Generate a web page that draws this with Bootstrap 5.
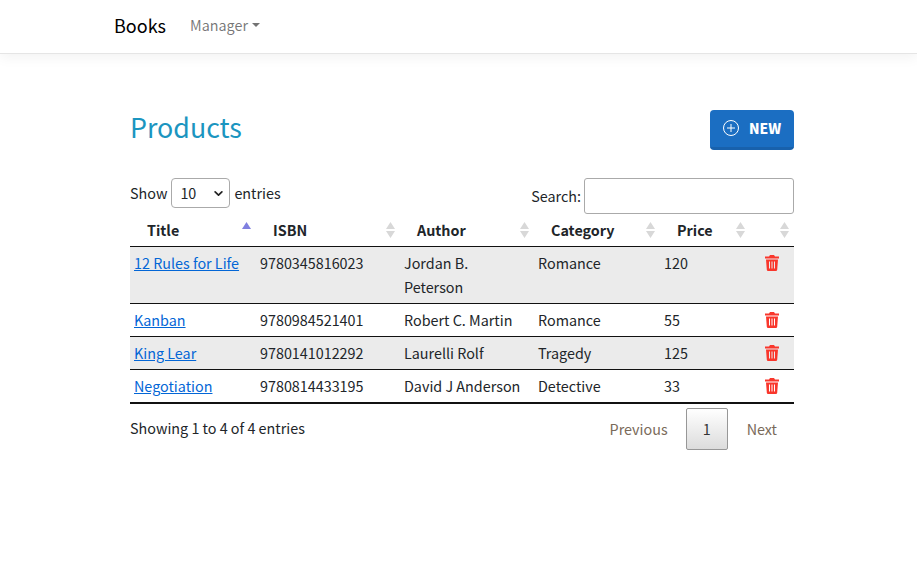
<!DOCTYPE html>
<html lang="en">
<head>
    <meta charset="UTF-8">
    <meta name="viewport" content="width=device-width, initial-scale=1.0">
    <title>Products</title>
    <link href="https://cdn.jsdelivr.net/npm/bootstrap@5.3.0/dist/css/bootstrap.min.css" rel="stylesheet">
    <style>
        body {
            background-color: #fff;
            font-family: "Noto Sans CJK SC", "Noto Sans", sans-serif;
            font-size: 14.35px;
            line-height: 24px;
            color: #212529;
        }
        a {
            color: #0366d6;
        }
        .top-bar {
            height: 54px;
            padding: 0 0 0 114px;
            box-shadow: 0 .25rem .75rem rgba(0, 0, 0, .05);
            border-bottom: 1px solid #e5e5e5;
        }
        .top-bar .navbar-brand {
            font-size: 18px;
            line-height: 26px;
            padding: 0 0 4px;
            margin-right: 16px;
        }
        .top-bar .nav-link {
            color: rgba(0, 0, 0, .55);
            padding: 6px 8px 10px;
        }
        .page-body {
            width: 664px;
            margin-left: 130px;
            padding-top: 56px;
        }
        .page-title {
            color: #1b95c0;
            font-size: 26.8px;
            font-weight: 400;
            line-height: 34px;
            margin: 0 0 6px;
        }
        .new-btn {
            height: 40px;
            width: 84px;
            padding: 0 0 2px 12px;
            background-color: #1b6ec2;
            border: 0;
            border-bottom: 3px solid #1861ac;
            border-radius: 4px;
            color: #fff;
            font-weight: 900;
            font-size: 13.8px;
        }
        .new-btn svg {
            margin-right: 9px;
        }
        .tools-row {
            margin-top: 28px;
            height: 36px;
        }
        .show-text {
            margin-right: 4px;
            padding-top: 3px;
        }
        .entries-text {
            margin-left: 4px;
            padding-top: 3px;
        }
        .len-select {
            width: 59px;
            height: 30px;
            padding: 0 0 0 8px;
            background-image: url("data:image/svg+xml,%3csvg xmlns='http://www.w3.org/2000/svg' viewBox='0 0 16 16'%3e%3cpath fill='none' stroke='%23222' stroke-linecap='round' stroke-linejoin='round' stroke-width='3' d='m2 5 6 6 6-6'/%3e%3c/svg%3e");
            background-position: right 6px center;
            background-size: 9px 9px;
            border-radius: 4px;
            font-size: 14.35px;
            line-height: 24px;
            border-color: #aaa;
            color: #212529;
        }
        .search-input {
            width: 210px;
            height: 36px;
            border: 1px solid #aaa;
            border-radius: 3px;
            margin-left: 3px;
        }
        .books-table {
            table-layout: fixed;
            width: 664px;
            margin: 0;
            color: #212529;
        }
        .books-table th {
            position: relative;
            padding: 3px 4px 4px 17px;
            height: 32px;
            font-weight: 700;
            border-bottom: 1px solid #111;
        }
        .books-table td {
            padding: 4px;
            border: 0;
            border-top: 1px solid #111;
            vertical-align: top;
            background: transparent;
        }
        .books-table tbody tr:first-child td {
            border-top: 0;
        }
        .books-table tbody tr:last-child td {
            border-bottom: 2px solid #111;
        }
        .books-table .shaded td {
            background-color: #ebebeb;
        }
        .sort-mark {
            position: absolute;
            right: 5px;
            top: 8px;
            width: 9px;
            height: 16px;
        }
        .trash-icon {
            display: block;
            width: 14px;
            height: 16px;
            margin: 4px 0 0 11px;
        }
        .info-row {
            padding-top: 4px;
        }
        .pager-btn {
            display: block;
            height: 42px;
            padding: 8px 17px;
            color: #7a6a5a;
            border: 1px solid transparent;
            border-radius: 2px;
            text-decoration: none;
        }
        .pager-btn.current {
            color: #333;
            width: 42px;
            padding: 8px 0;
            text-align: center;
            border-color: #979797;
            background: linear-gradient(to bottom, #fff 0%, #dcdcdc 100%);
        }
        .pager-btn.next-link {
            padding-left: 18px;
            padding-right: 16px;
        }
    </style>
</head>
<body>
    <nav class="navbar navbar-expand navbar-light bg-white top-bar justify-content-start">
        <a class="navbar-brand" href="#">Books</a>
        <ul class="navbar-nav">
            <li class="nav-item dropdown">
                <a class="nav-link dropdown-toggle" href="#" role="button" data-bs-toggle="dropdown">Manager</a>
            </li>
        </ul>
    </nav>

    <main class="page-body">
        <div class="d-flex justify-content-between align-items-center">
            <h1 class="page-title">Products</h1>
            <button class="new-btn d-flex align-items-center" type="button">
                <svg width="18" height="18" viewBox="0 0 18 18" fill="none" stroke="#fff">
                    <circle cx="9" cy="9" r="7.5"/>
                    <path d="M9 5v8M5 9h8"/>
                </svg>
                <span>NEW</span>
            </button>
        </div>

        <div class="tools-row d-flex justify-content-between">
            <label class="d-flex align-items-start">
                <span class="show-text">Show</span>
                <select class="form-select len-select">
                    <option>10</option>
                    <option>25</option>
                </select>
                <span class="entries-text">entries</span>
            </label>
            <label class="d-flex align-items-center">
                Search:<input type="search" class="search-input">
            </label>
        </div>

        <table class="table books-table">
            <colgroup>
                <col width="126"><col width="144"><col width="134"><col width="126"><col width="90"><col width="44">
            </colgroup>
            <thead>
                <tr>
                    <th>Title<svg class="sort-mark" viewBox="0 0 9 16"><path d="M4.500 0L9 7H0z" fill="#8080e0"/></svg></th>
                    <th>ISBN<svg class="sort-mark" viewBox="0 0 9 16"><path d="M4.500 0L9 7H0zM4.500 16L9 9H0z" fill="#d8d8d8"/></svg></th>
                    <th>Author<svg class="sort-mark" viewBox="0 0 9 16"><path d="M4.500 0L9 7H0zM4.500 16L9 9H0z" fill="#d8d8d8"/></svg></th>
                    <th>Category<svg class="sort-mark" viewBox="0 0 9 16"><path d="M4.500 0L9 7H0zM4.500 16L9 9H0z" fill="#d8d8d8"/></svg></th>
                    <th>Price<svg class="sort-mark" viewBox="0 0 9 16"><path d="M4.500 0L9 7H0zM4.500 16L9 9H0z" fill="#d8d8d8"/></svg></th>
                    <th><svg class="sort-mark" viewBox="0 0 9 16"><path d="M4.500 0L9 7H0zM4.500 16L9 9H0z" fill="#d8d8d8"/></svg></th>
                </tr>
            </thead>
            <tbody>
                <tr class="shaded">
                    <td><a href="#">12 Rules for Life</a></td>
                    <td>9780345816023</td>
                    <td>Jordan B. Peterson</td>
                    <td>Romance</td>
                    <td>120</td>
                    <td><svg class="trash-icon" viewBox="0 0 14 16"><path fill="#f9372c" fill-rule="evenodd" d="M5 0h4l1 1.500h4V3.500H0V1.500h4zM1 4.500h12l-.8 10.200a1.400 1.400 0 0 1-1.400 1.300H3.200a1.400 1.400 0 0 1-1.400-1.300zM4 6.500v7h1v-7zM6.500 6.500v7h1v-7zM9 6.500v7h1v-7z"/></svg></td>
                </tr>
                <tr>
                    <td><a href="#">Kanban</a></td>
                    <td>9780984521401</td>
                    <td>Robert C. Martin</td>
                    <td>Romance</td>
                    <td>55</td>
                    <td><svg class="trash-icon" viewBox="0 0 14 16"><path fill="#f9372c" fill-rule="evenodd" d="M5 0h4l1 1.500h4V3.500H0V1.500h4zM1 4.500h12l-.8 10.200a1.400 1.400 0 0 1-1.400 1.300H3.200a1.400 1.400 0 0 1-1.400-1.300zM4 6.500v7h1v-7zM6.500 6.500v7h1v-7zM9 6.500v7h1v-7z"/></svg></td>
                </tr>
                <tr class="shaded">
                    <td><a href="#">King Lear</a></td>
                    <td>9780141012292</td>
                    <td>Laurelli Rolf</td>
                    <td>Tragedy</td>
                    <td>125</td>
                    <td><svg class="trash-icon" viewBox="0 0 14 16"><path fill="#f9372c" fill-rule="evenodd" d="M5 0h4l1 1.500h4V3.500H0V1.500h4zM1 4.500h12l-.8 10.200a1.400 1.400 0 0 1-1.400 1.300H3.200a1.400 1.400 0 0 1-1.400-1.300zM4 6.500v7h1v-7zM6.500 6.500v7h1v-7zM9 6.500v7h1v-7z"/></svg></td>
                </tr>
                <tr>
                    <td><a href="#">Negotiation</a></td>
                    <td>9780814433195</td>
                    <td>David J Anderson</td>
                    <td>Detective</td>
                    <td>33</td>
                    <td><svg class="trash-icon" viewBox="0 0 14 16"><path fill="#f9372c" fill-rule="evenodd" d="M5 0h4l1 1.500h4V3.500H0V1.500h4zM1 4.500h12l-.8 10.200a1.400 1.400 0 0 1-1.400 1.300H3.200a1.400 1.400 0 0 1-1.400-1.300zM4 6.500v7h1v-7zM6.500 6.500v7h1v-7zM9 6.500v7h1v-7z"/></svg></td>
                </tr>
            </tbody>
        </table>

        <div class="info-row d-flex justify-content-between align-items-start">
            <div class="pt-2">Showing 1 to 4 of 4 entries</div>
            <div class="d-flex">
                <a class="pager-btn" href="#">Previous</a>
                <a class="pager-btn current" href="#">1</a>
                <a class="pager-btn next-link" href="#">Next</a>
            </div>
        </div>
    </main>

    <script src="https://cdn.jsdelivr.net/npm/bootstrap@5.3.0/dist/js/bootstrap.bundle.min.js"></script>
</body>
</html>
